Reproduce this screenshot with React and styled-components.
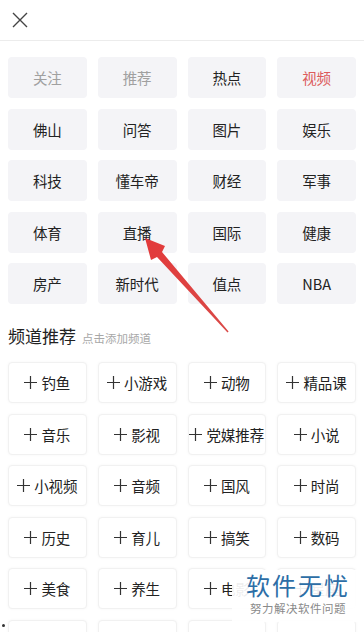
import styled, { createGlobalStyle } from "styled-components";

const GlobalStyle = createGlobalStyle`
  html, body {
    margin: 0;
    padding: 0;
    background: #ffffff;
  }
  body {
    font-family: "Noto Sans CJK SC", "Noto Sans", sans-serif;
    color: #222;
  }
`;

const Page = styled.div`
  position: relative;
  width: 364px;
  height: 632px;
  overflow: hidden;
  background: #fff;
`;

const Header = styled.div`
  display: flex;
  align-items: center;
  height: 40px;
  padding-left: 11px;
  border-bottom: 1px solid #ececec;
`;

const CloseButton = styled.button`
  display: flex;
  align-items: center;
  justify-content: center;
  width: 18px;
  height: 18px;
  padding: 0;
  border: none;
  background: none;
`;

const Grid = styled.div`
  display: grid;
  grid-template-columns: repeat(4, 1fr);
  grid-auto-rows: 41px;
  column-gap: 11px;
  row-gap: 10.5px;
  padding: 0 8px;
`;

const MyGrid = styled(Grid)`
  padding-top: 16px;
`;

const Channel = styled.div`
  display: flex;
  align-items: center;
  justify-content: center;
  border-radius: 4px;
  background: #f4f4f7;
  font-size: 14.5px;
  color: ${(p) => p.$color || "#222"};
`;

const SectionHead = styled.div`
  display: flex;
  align-items: baseline;
  gap: 6px;
  height: 58px;
  box-sizing: border-box;
  padding: 19px 8px 0;
`;

const SectionTitle = styled.span`
  font-size: 17px;
  color: #222;
`;

const SectionHint = styled.span`
  font-size: 11.5px;
  color: #a8a8a8;
`;

const AddChannel = styled.div`
  display: flex;
  align-items: center;
  justify-content: center;
  gap: 4px;
  border-radius: 4px;
  background: #fff;
  border: 1px solid #f1f1f1;
  box-shadow: 0 0 3px rgba(0, 0, 0, 0.04);
  font-size: 14.5px;
  color: #222;
  white-space: nowrap;
`;

const Arrow = styled.svg`
  position: absolute;
  left: 0;
  top: 0;
  pointer-events: none;
`;

const Watermark = styled.div`
  position: absolute;
  left: 232px;
  top: 570px;
  width: 132px;
  height: 52px;
  display: flex;
  flex-direction: column;
  align-items: center;
  background: rgba(255, 255, 255, 0.92);
`;

const MarkTitle = styled.div`
  font-size: 24px;
  line-height: 30px;
  letter-spacing: 2px;
  color: #2d6ea6;
`;

const MarkSub = styled.div`
  font-size: 11.5px;
  line-height: 16px;
  letter-spacing: 0.5px;
  color: #8a8a8a;
`;

const Dot = styled.div`
  position: absolute;
  left: 2px;
  top: 624px;
  width: 3px;
  height: 3px;
  border-radius: 50%;
  background: #333;
`;

const mine = [
  { name: "关注", color: "#a0a0a0" },
  { name: "推荐", color: "#a0a0a0" },
  { name: "热点" },
  { name: "视频", color: "#dc5b5b" },
  { name: "佛山" },
  { name: "问答" },
  { name: "图片" },
  { name: "娱乐" },
  { name: "科技" },
  { name: "懂车帝" },
  { name: "财经" },
  { name: "军事" },
  { name: "体育" },
  { name: "直播" },
  { name: "国际" },
  { name: "健康" },
  { name: "房产" },
  { name: "新时代" },
  { name: "值点" },
  { name: "NBA" },
];

// last row lies below the fold, only the tops of its boxes show
const recommended = [
  "钓鱼", "小游戏", "动物", "精品课",
  "音乐", "影视", "党媒推荐", "小说",
  "小视频", "音频", "国风", "时尚",
  "历史", "育儿", "搞笑", "数码",
  "美食", "养生", "电影", "星座",
  null, null, null, null,
];

const Plus = () => (
  <svg width="13" height="13" viewBox="0 0 13 13">
    <path d="M0 6.5H13M6.5 0V13" stroke="#333" strokeWidth="1.2" />
  </svg>
);

const App = () => {
  return (
    <Page>
      <GlobalStyle />
      <Header>
        <CloseButton>
          <svg width="16" height="16" viewBox="0 0 16 16">
            <path d="M1 1L15 15M15 1L1 15" stroke="#444" strokeWidth="1.4" />
          </svg>
        </CloseButton>
      </Header>
      <MyGrid>
        {mine.map((c) => (
          <Channel key={c.name} $color={c.color}>
            {c.name}
          </Channel>
        ))}
      </MyGrid>
      <SectionHead>
        <SectionTitle>频道推荐</SectionTitle>
        <SectionHint>点击添加频道</SectionHint>
      </SectionHead>
      <Grid>
        {recommended.map((name, i) => (
          <AddChannel key={i}>
            {name && (
              <>
                <Plus />
                {name}
              </>
            )}
          </AddChannel>
        ))}
      </Grid>

      <Arrow width="364" height="632" viewBox="0 0 364 632">
        <defs>
          <linearGradient id="arrowFill" x1="0" y1="0" x2="1" y2="1">
            <stop offset="0" stopColor="#e3393a" />
            <stop offset="1" stopColor="#d94a48" />
          </linearGradient>
        </defs>
        <polygon
          points="145,238 151,260 157,257 227.5,332.5 228.6,331.5 162,252 165,246"
          fill="url(#arrowFill)"
        />
      </Arrow>

      <Watermark>
        <MarkTitle>软件无忧</MarkTitle>
        <MarkSub>努力解决软件问题</MarkSub>
      </Watermark>
      <Dot />
    </Page>
  );
};

export default App;
